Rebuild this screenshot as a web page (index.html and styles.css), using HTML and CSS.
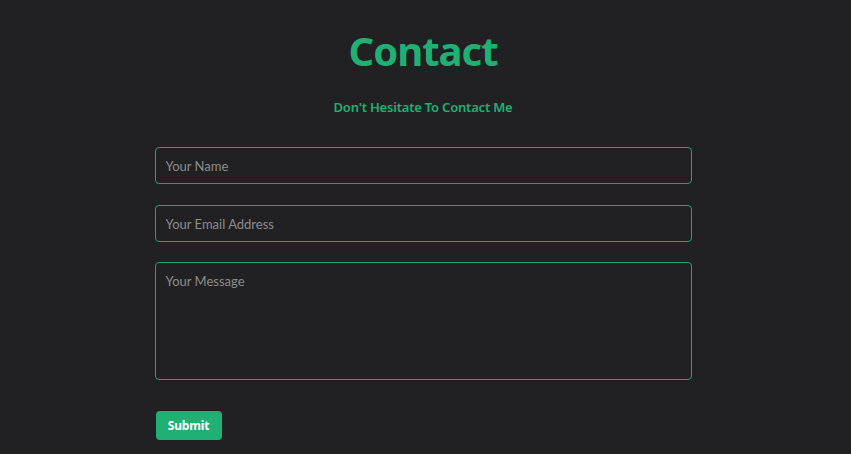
FILE: index.html
```html
<!DOCTYPE html>
<html lang="en">
<head>
    <meta charset="UTF-8">
    <meta name="viewport" content="width=device-width, initial-scale=1.0">
    <title>Contact</title>
    <link rel="stylesheet" href="styles.css">
</head>
<body>

<section class="contact">
    <h1 class="contact-title">Contact</h1>
    <p class="contact-subtitle">Don't Hesitate To Contact Me</p>

    <form class="contact-form">
        <input type="text" placeholder="Your Name">
        <input type="email" placeholder="Your Email Address">
        <textarea placeholder="Your Message"></textarea>
        <div class="actions">
            <button type="button">Submit</button>
        </div>
    </form>
</section>

</body>
</html>
```

FILE: styles.css
```css
body {
    margin: 0;
    padding: 0 5px 0 0;
    background-color: #212123;
    font-family: Lato, "Noto Sans", Arial, sans-serif;
    color: #ddd;
}

.contact {
    width: 537px;
    margin: 0 auto;
    padding-top: 26px;
}

.contact-title {
    margin: 0;
    text-align: center;
    font-family: "Noto Sans", Arial, sans-serif;
    font-size: 40px;
    font-weight: 700;
    line-height: 50px;
    color: #20b073;
    letter-spacing: -1px;
}

.contact-subtitle {
    margin: 22px 0 0;
    text-align: center;
    font-family: "Noto Sans", Arial, sans-serif;
    font-size: 13px;
    font-weight: 600;
    line-height: 18px;
    color: #20b073;
    letter-spacing: -0.2px;
}

.contact-form {
    display: flex;
    flex-direction: column;
    gap: 21px;
    margin-top: 31px;
}

.contact-form input,
.contact-form textarea {
    box-sizing: border-box;
    width: 100%;
    margin: 0;
    padding: 9px 10px;
    background-color: #212123;
    border: 1px solid #22a46f;
    border-radius: 4px;
    font-family: Lato, "Noto Sans", Arial, sans-serif;
    font-size: 13px;
    color: #ddd;
    outline: none;
}

.contact-form input {
    height: 37px;
}

.contact-form textarea {
    height: 118px;
    margin-top: -1px;
    resize: none;
    padding-top: 10px;
}

.contact-form input::placeholder,
.contact-form textarea::placeholder {
    color: #8c8c8c;
}

.actions {
    margin-top: 10px;
}

.actions button {
    margin-left: 1px;
    width: 66px;
    height: 29px;
    padding: 0;
    background-color: #20b073;
    color: #fff;
    border: none;
    border-radius: 4px;
    font-family: "Noto Sans", Arial, sans-serif;
    font-size: 12px;
    font-weight: 700;
    letter-spacing: -0.2px;
    cursor: pointer;
}
```
